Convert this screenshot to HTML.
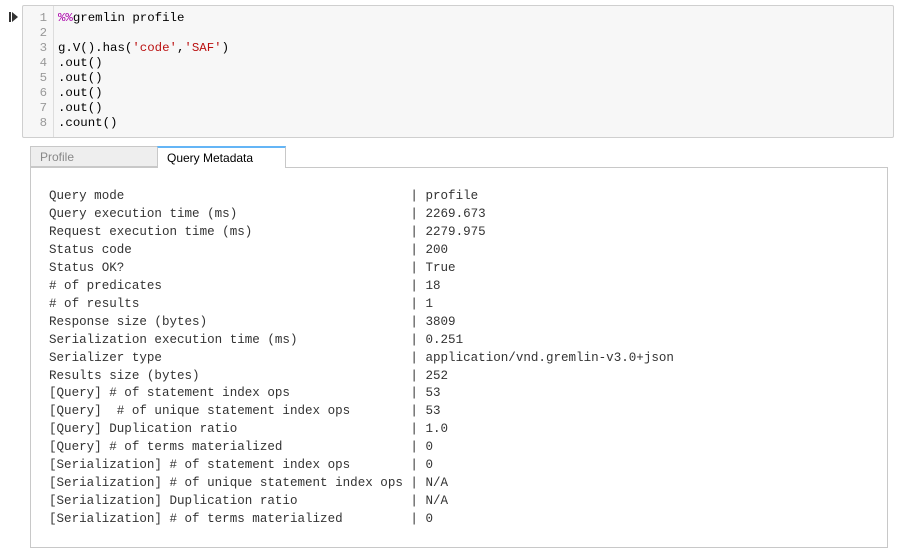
<!DOCTYPE html>
<html><head><meta charset="utf-8"><style>
body{margin:0;background:#fff;width:902px;height:554px;position:relative;overflow:hidden;font-family:"Liberation Sans",sans-serif}
.run{position:absolute;left:9px;top:11px;width:10px;height:12px}
.cell{position:absolute;left:22px;top:5px;width:870px;height:131px;background:#f7f7f7;border:1px solid #cfcfcf;border-radius:2px}
.gut{position:absolute;left:0;top:0;width:30px;height:131px;border-right:1px solid #ddd}
.code{position:absolute;top:5px;font-family:"Liberation Mono",monospace;font-size:12.4px;line-height:15px;white-space:pre}
.ln{left:0;width:24px;text-align:right;color:#999}
.src{left:35px;color:#000}
.mg{color:#a0a}.st{color:#b11}
.tab{position:absolute;top:146px;height:21px;font-size:12px;line-height:21px;padding-left:9px;box-sizing:border-box}
.t1{left:30px;width:128px;background:#eee;border:1px solid #c8c8c8;color:#888}
.t2{left:157px;width:129px;background:#fff;border:1px solid #c8c8c8;border-top:2px solid #64b5f6;border-bottom:none;height:22px;color:#000}
.out{position:absolute;left:30px;top:167px;width:856px;height:379px;border:1px solid #c8c8c8;background:#fff}
.tbl{position:absolute;left:18px;top:20px;font-family:"Liberation Mono",monospace;font-size:12.55px;line-height:17.95px;white-space:pre;color:#333}
</style></head><body>
<svg class="run" viewBox="0 0 10 12"><rect x="0" y="1" width="2" height="10" fill="#333"/><path d="M3 1 L9 6 L3 11Z" fill="#333"/></svg>
<div class="cell"><div class="gut"></div>
<div class="code ln">1
2
3
4
5
6
7
8</div>
<div class="code src"><span class="mg">%%</span>gremlin profile

g.V().has(<span class="st">'code'</span>,<span class="st">'SAF'</span>)
.out()
.out()
.out()
.out()
.count()</div></div>
<div class="tab t1">Profile</div>
<div class="out"><div class="tbl">Query mode                                      | profile
Query execution time (ms)                       | 2269.673
Request execution time (ms)                     | 2279.975
Status code                                     | 200
Status OK?                                      | True
# of predicates                                 | 18
# of results                                    | 1
Response size (bytes)                           | 3809
Serialization execution time (ms)               | 0.251
Serializer type                                 | application/vnd.gremlin-v3.0+json
Results size (bytes)                            | 252
[Query] # of statement index ops                | 53
[Query]  # of unique statement index ops        | 53
[Query] Duplication ratio                       | 1.0
[Query] # of terms materialized                 | 0
[Serialization] # of statement index ops        | 0
[Serialization] # of unique statement index ops | N/A
[Serialization] Duplication ratio               | N/A
[Serialization] # of terms materialized         | 0</div></div>
<div class="tab t2">Query Metadata</div>
</body></html>
